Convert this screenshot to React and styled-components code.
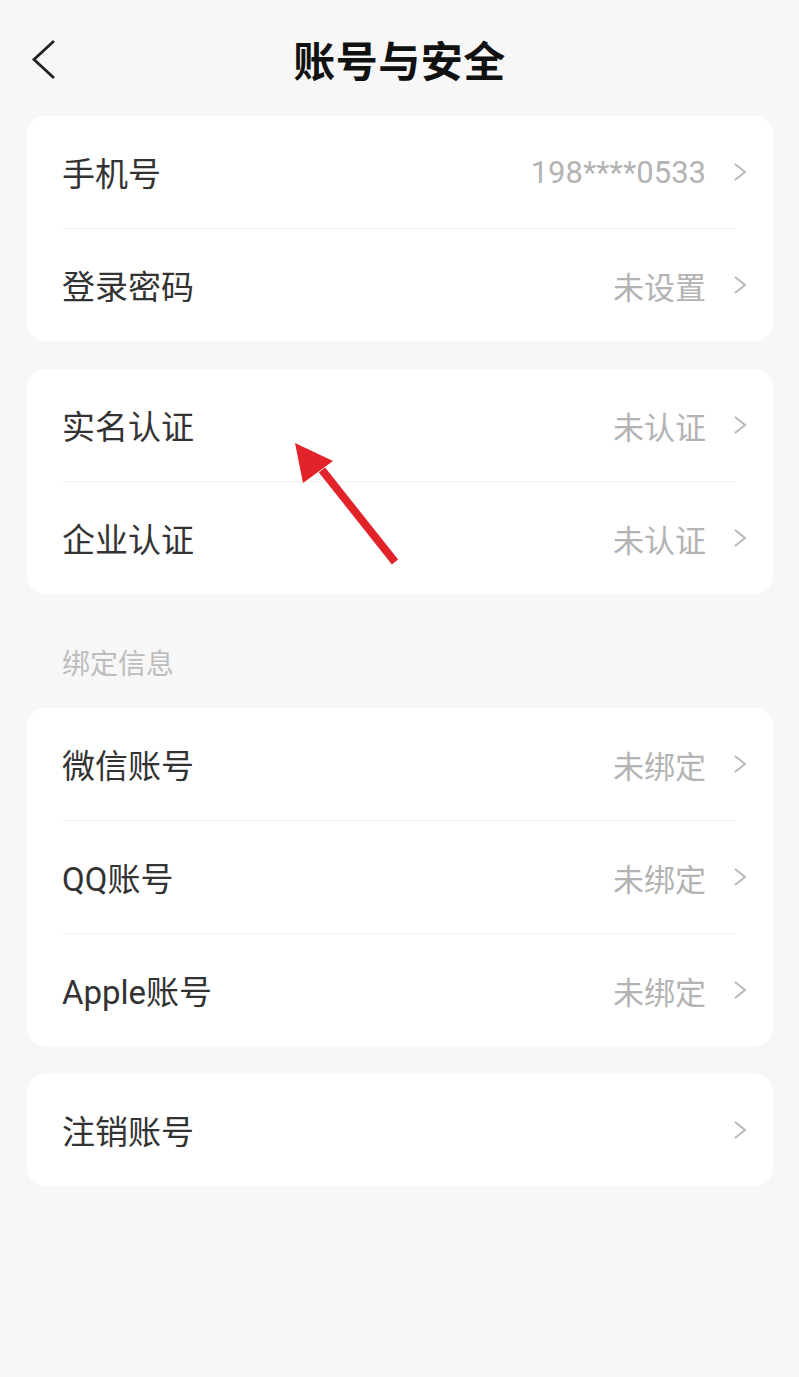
import React from 'react'
import styled, { createGlobalStyle } from 'styled-components'

const GlobalStyle = createGlobalStyle`
  html, body {
    margin: 0;
    padding: 0;
    background: #f7f7f7;
  }
  body {
    font-family: Roboto, "Noto Sans CJK SC", sans-serif;
  }
`

const groups = [
  {
    rows: [
      { label: '手机号', value: '198****0533' },
      { label: '登录密码', value: '未设置' },
    ],
  },
  {
    rows: [
      { label: '实名认证', value: '未认证' },
      { label: '企业认证', value: '未认证' },
    ],
  },
  {
    title: '绑定信息',
    rows: [
      { label: '微信账号', value: '未绑定' },
      { label: 'QQ账号', value: '未绑定' },
      { label: 'Apple账号', value: '未绑定' },
    ],
  },
  {
    rows: [{ label: '注销账号' }],
  },
]

function BackIcon() {
  return (
    <svg width="28" height="42" viewBox="0 0 28 42">
      <path d="M24 2 L4 20.5 L24 39" fill="none" stroke="#222" strokeWidth="2.8" />
    </svg>
  )
}

function Chevron() {
  return (
    <svg width="14" height="20" viewBox="0 0 14 20">
      <path d="M2 2 L12 10 L2 18" fill="none" stroke="#b8b8b8" strokeWidth="2" />
    </svg>
  )
}

function RedArrow() {
  return (
    <svg width="130" height="140" viewBox="0 0 130 140">
      <line x1="30" y1="30" x2="103" y2="122" stroke="#e3232a" strokeWidth="8" />
      <polygon points="3,3 41,21 11,43" fill="#e3232a" />
    </svg>
  )
}

export default function App() {
  return (
    <Page>
      <GlobalStyle />
      <Header>
        <BackButton>
          <BackIcon />
        </BackButton>
        <Title>账号与安全</Title>
      </Header>
      <Content>
        {groups.map((group, gi) => (
          <Group key={gi}>
            {group.title && <SectionLabel>{group.title}</SectionLabel>}
            <Card>
              {group.rows.map((row, ri) => (
                <React.Fragment key={row.label}>
                  {ri > 0 && <Divider />}
                  <Row>
                    <Label>{row.label}</Label>
                    <Right>
                      {row.value && <Value>{row.value}</Value>}
                      <Chevron />
                    </Right>
                  </Row>
                </React.Fragment>
              ))}
            </Card>
          </Group>
        ))}
      </Content>
      <Pointer>
        <RedArrow />
      </Pointer>
    </Page>
  )
}

const Page = styled.div`
  position: relative;
  width: 799px;
  min-height: 1377px;
  background: #f7f7f7;
`

const Header = styled.header`
  position: relative;
  height: 116px;
  display: flex;
  align-items: center;
  justify-content: center;
`

const BackButton = styled.div`
  position: absolute;
  left: 30px;
  top: 39px;
  display: flex;
`

const Title = styled.h1`
  margin: 0;
  font-size: 42px;
  font-weight: 700;
  color: #111;
  letter-spacing: 0.5px;
  font-family: "Noto Sans CJK SC", sans-serif;
`

const Content = styled.div`
  display: flex;
  flex-direction: column;
  gap: 28px;
  padding: 0 26px 0 27px;
`

const Group = styled.div`
  display: flex;
  flex-direction: column;
`

const SectionLabel = styled.div`
  margin-top: -28px;
  height: 114px;
  box-sizing: border-box;
  padding: 50px 0 0 35px;
  font-size: 28px;
  line-height: 36px;
  color: #bdbdbd;
  font-family: "Noto Sans CJK SC", sans-serif;
`

const Card = styled.div`
  background: #fff;
  border-radius: 18px;
  display: flex;
  flex-direction: column;
`

const Row = styled.div`
  height: 112px;
  display: flex;
  align-items: center;
  justify-content: space-between;
  padding: 0 26px 0 35px;
`

const Label = styled.span`
  font-size: 33px;
  color: #333;
`

const Right = styled.div`
  display: flex;
  align-items: center;
  gap: 27px;
`

const Value = styled.span`
  font-size: 31px;
  color: #b3b3b3;
`

const Divider = styled.div`
  height: 1px;
  background: #f3f3f3;
  margin: 0 37px 0 35px;
`

const Pointer = styled.div`
  position: absolute;
  left: 292px;
  top: 440px;
  display: flex;
`
